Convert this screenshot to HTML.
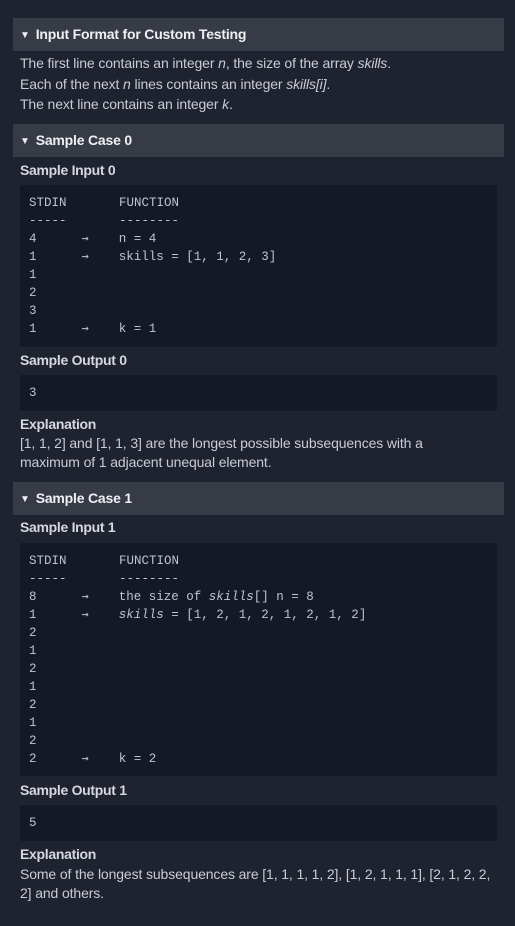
<!DOCTYPE html>
<html><head><style>
body{margin:0;width:515px;height:926px;background:#1f2330;font-family:"Liberation Sans",sans-serif;color:#c9ccd3;position:relative;overflow:hidden}
.hd{position:absolute;left:13px;width:491px;height:33px;background:#373b46;color:#eef0f3;font-weight:bold;font-size:14px;line-height:33px;box-sizing:border-box;padding-left:7px;letter-spacing:-0.2px}
.hd span{font-size:10px;margin-right:6px;position:relative;top:-1px}
.t{position:absolute;left:20px;font-size:14px;line-height:20px;white-space:nowrap;letter-spacing:-0.12px}
.b{position:absolute;left:20px;font-size:14px;font-weight:bold;color:#d5d8de;line-height:20px;letter-spacing:-0.3px}
.code{position:absolute;left:20px;width:477px;background:#131927;border-radius:2px;box-sizing:border-box;padding:9px 0 0 9px;font-family:"Liberation Mono",monospace;font-size:12.5px;line-height:18px;color:#bfc4cc;white-space:pre}
.ar{font-family:"DejaVu Sans Mono",monospace;font-size:12px;line-height:0}
</style></head><body>
<div class="hd" style="top:18px"><span>▼</span>Input Format for Custom Testing</div>
<div class="t" style="top:53px">The first line contains an integer <i>n</i>, the size of the array <i>skills</i>.</div>
<div class="t" style="top:74px">Each of the next <i>n</i> lines contains an integer <i>skills[i]</i>.</div>
<div class="t" style="top:94px">The next line contains an integer <i>k</i>.</div>
<div class="hd" style="top:124px"><span>▼</span>Sample Case 0</div>
<div class="b" style="top:160px">Sample Input 0</div>
<div class="code" style="top:185px;height:162px">STDIN       FUNCTION
-----       --------
4      <span class="ar">→</span>    n = 4
1      <span class="ar">→</span>    skills = [1, 1, 2, 3]
1
2
3
1      <span class="ar">→</span>    k = 1</div>
<div class="b" style="top:350px">Sample Output 0</div>
<div class="code" style="top:375px;height:36px">3</div>
<div class="b" style="top:414px">Explanation</div>
<div class="t" style="top:433px">[1, 1, 2] and [1, 1, 3] are the longest possible subsequences with a</div>
<div class="t" style="top:452px">maximum of 1 adjacent unequal element.</div>
<div class="hd" style="top:482px"><span>▼</span>Sample Case 1</div>
<div class="b" style="top:517px">Sample Input 1</div>
<div class="code" style="top:543px;height:233px">STDIN       FUNCTION
-----       --------
8      <span class="ar">→</span>    the size of <i>skills</i>[] n = 8
1      <span class="ar">→</span>    <i>skills</i> = [1, 2, 1, 2, 1, 2, 1, 2]
2
1
2
1
2
1
2
2      <span class="ar">→</span>    k = 2</div>
<div class="b" style="top:780px">Sample Output 1</div>
<div class="code" style="top:805px;height:36px">5</div>
<div class="b" style="top:844px">Explanation</div>
<div class="t" style="top:864px">Some of the longest subsequences are [1, 1, 1, 1, 2], [1, 2, 1, 1, 1], [2, 1, 2, 2,</div>
<div class="t" style="top:883px">2] and others.</div>
</body></html>
